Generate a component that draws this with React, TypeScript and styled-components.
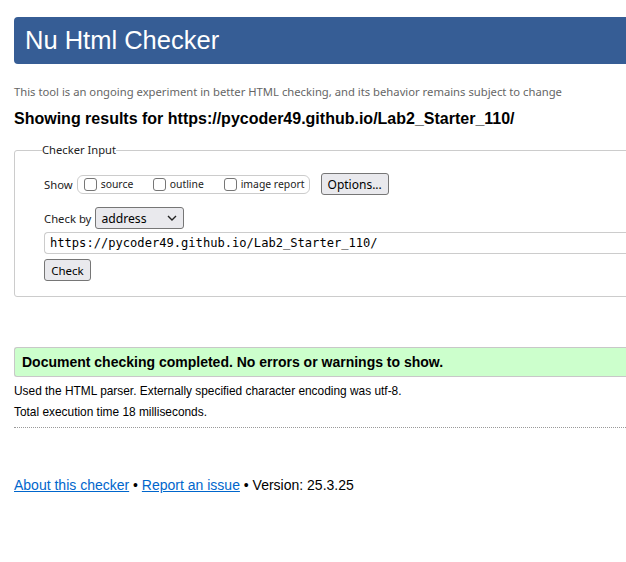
import React from "react";
import styled, { createGlobalStyle } from "styled-components";

const Global = createGlobalStyle`
  html, body { margin: 0; padding: 0; background: #fff; overflow: hidden; }
  body { font-family: "Liberation Sans", Arial, sans-serif; color: #000; }
`;

const Page = styled.div`
  width: 760px;
  padding: 17px 0 0 14px;
`;

const Header = styled.header`
  height: 47px;
  background: #365d95;
  border-radius: 4px 0 0 4px;
  display: flex;
  align-items: center;
  padding-left: 11px;
`;

const Title = styled.h1`
  margin: 0;
  font-family: "Liberation Sans", Arial, sans-serif;
  font-weight: 400;
  font-size: 25.5px;
  color: #fff;
`;

const Note = styled.p`
  margin: 20px 0 0;
  font-family: "Noto Sans", "Open Sans", sans-serif;
  font-size: 11.25px;
  line-height: 16px;
  color: #666;
`;

const Heading = styled.h2`
  margin: 9px 0 0;
  font-size: 16px;
  line-height: 20px;
  font-weight: 700;
`;

const Fieldset = styled.fieldset`
  margin: 14px 0 0;
  padding: 12px 0 15px 29px;
  border: 1px solid #ccc;
  border-radius: 3px;
  display: flex;
  flex-direction: column;
  font-family: "Noto Sans", "Open Sans", sans-serif;
`;

const Legend = styled.legend`
  margin-left: -2px;
  padding: 0;
  font-size: 11.2px;
  line-height: 14px;
  color: #222;
`;

const Row = styled.div<{ $mt?: number }>`
  display: flex;
  align-items: center;
  margin-top: ${(p) => p.$mt ?? 0}px;
`;

const Label = styled.span`
  font-size: 11.3px;
  color: #222;
  margin-right: 4px;
  white-space: nowrap;
`;

const ShowBox = styled.div`
  display: flex;
  align-items: center;
  flex-shrink: 0;
  height: 19px;
  width: 233px;
  box-sizing: border-box;
  border: 1px solid #ccc;
  border-radius: 6px;
  padding-left: 6px;
  margin-right: 11px;
`;

const Check = styled.label<{ $w: number }>`
  display: flex;
  align-items: center;
  flex-shrink: 0;
  white-space: nowrap;
  width: ${(p) => p.$w}px;
  font-size: 10.4px;
  color: #222;
`;

const Box = styled.span`
  width: 11px;
  height: 11px;
  flex-shrink: 0;
  border: 1px solid #767676;
  border-radius: 3px;
  margin-right: 4px;
  background: #fff;
`;

const Button = styled.button<{ $w: number; $fs: number }>`
  width: ${(p) => p.$w}px;
  height: 22px;
  padding: 0;
  flex-shrink: 0;
  border: 1px solid #767676;
  border-radius: 3px;
  background: #e9e9ed;
  font-family: "Noto Sans", "Open Sans", sans-serif;
  font-size: ${(p) => p.$fs}px;
  color: #000;
`;

const Select = styled.div`
  width: 89px;
  height: 22px;
  box-sizing: border-box;
  border: 1px solid #767676;
  border-radius: 3px;
  background: #e9e9ed;
  display: flex;
  align-items: center;
  justify-content: space-between;
  padding: 0 6px 0 5px;
  font-size: 12.2px;
  color: #000;
`;

const UrlInput = styled.div`
  margin-top: 3px;
  height: 22px;
  box-sizing: border-box;
  border: 1px solid #ccc;
  border-right: none;
  border-radius: 4px 0 0 4px;
  display: flex;
  align-items: center;
  padding-left: 5px;
  font-family: "DejaVu Sans Mono", "Liberation Mono", monospace;
  font-size: 12.1px;
  color: #000;
`;

const Success = styled.div`
  margin-top: 50px;
  height: 30px;
  box-sizing: border-box;
  background: #ccffcc;
  border: 1px solid #c8c8c8;
  border-right: none;
  border-radius: 3px 0 0 3px;
  display: flex;
  align-items: center;
  padding-left: 7px;
  font-size: 14px;
  font-weight: 700;
`;

const Detail = styled.p<{ $mt: number }>`
  margin: ${(p) => p.$mt}px 0 0;
  font-size: 11.9px;
  line-height: 14px;
`;

const Rule = styled.hr`
  margin: 8px 0 0;
  border: none;
  border-top: 1px dotted #999;
`;

const Footer = styled.p`
  margin: 49px 0 0;
  font-size: 14px;
  line-height: 16px;
`;

const Link = styled.a`
  color: #0066cc;
  text-decoration: underline;
`;

const Chevron = () => (
  <svg width="10" height="6" viewBox="0 0 10 6" fill="none">
    <path d="M1 1l4 4 4-4" stroke="#222" strokeWidth="1.4" />
  </svg>
);

export default function App() {
  return (
    <Page>
      <Global />
      <Header>
        <Title>Nu Html Checker</Title>
      </Header>
      <Note>
        This tool is an ongoing experiment in better HTML checking, and its behavior remains subject to change
      </Note>
      <Heading>Showing results for https://pycoder49.github.io/Lab2_Starter_110/</Heading>
      <Fieldset>
        <Legend>Checker Input</Legend>
        <Row $mt={4}>
          <Label>Show</Label>
          <ShowBox>
            <Check $w={69}>
              <Box />
              source
            </Check>
            <Check $w={71}>
              <Box />
              outline
            </Check>
            <Check $w={80}>
              <Box />
              image report
            </Check>
          </ShowBox>
          <Button $w={68} $fs={12}>Options...</Button>
        </Row>
        <Row $mt={12}>
          <Label>Check by</Label>
          <Select>
            address
            <Chevron />
          </Select>
        </Row>
        <UrlInput>https://pycoder49.github.io/Lab2_Starter_110/</UrlInput>
        <Row $mt={5}>
          <Button $w={47} $fs={11.5}>Check</Button>
        </Row>
      </Fieldset>
      <Success>Document checking completed. No errors or warnings to show.</Success>
      <Detail $mt={7}>Used the HTML parser. Externally specified character encoding was utf-8.</Detail>
      <Detail $mt={7}>Total execution time 18 milliseconds.</Detail>
      <Rule />
      <Footer>
        <Link href="#">About this checker</Link> • <Link href="#">Report an issue</Link> • Version: 25.3.25
      </Footer>
    </Page>
  );
}
